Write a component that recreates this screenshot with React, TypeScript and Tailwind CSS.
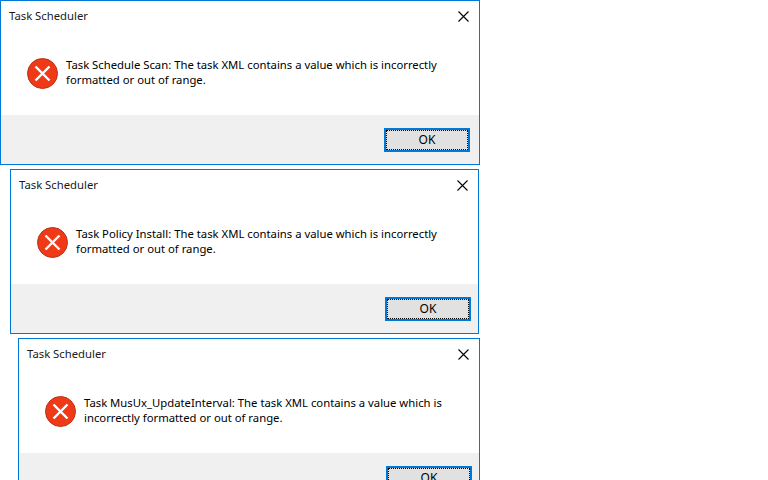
import React from 'react';

function ErrorIcon() {
  return (
    <svg width="31" height="31" viewBox="0 0 31 31" className="mt-[0.5px] shrink-0">
      <circle cx="15.5" cy="15.5" r="15" fill="#f03a17" stroke="#b5341c" strokeWidth="1" />
      <path d="M8.5 8.5 L22.5 22.5 M22.5 8.5 L8.5 22.5" stroke="#fff" strokeWidth="2.4" fill="none" />
    </svg>
  );
}

function CloseIcon() {
  return (
    <svg width="11" height="11" viewBox="0 0 11 11">
      <path d="M0.5 0.5 L10.5 10.5 M10.5 0.5 L0.5 10.5" stroke="#000" strokeWidth="1.1" fill="none" />
    </svg>
  );
}

type DialogProps = {
  className: string;
  footerClass: string;
  lines: string[];
};

function Dialog({ className, footerClass, lines }: DialogProps) {
  return (
    <div className={`flex h-[165px] shrink-0 flex-col border border-[#0078d7] bg-white ${className}`}>
      <div className="flex h-[30px] shrink-0 items-center justify-between pl-2 pr-[10px]">
        <span>Task Scheduler</span>
        <CloseIcon />
      </div>
      <div className="flex h-[84px] shrink-0 items-start pl-[26px] pt-[26px]">
        <ErrorIcon />
        <div className="ml-[8px] leading-[15px] text-black whitespace-nowrap">
          {lines.map((line) => (
            <div key={line}>{line}</div>
          ))}
        </div>
      </div>
      <div className={`flex flex-1 items-start justify-end bg-[#f0f0f0] pt-[13px] ${footerClass}`}>
        <button className="h-[24px] w-[86px] border-2 border-[#0078d7] bg-[#e1e1e1] p-0">
          <span className="flex h-full w-full items-center justify-center border border-dotted border-black text-[12px] text-black">
            OK
          </span>
        </button>
      </div>
    </div>
  );
}

export default function App() {
  return (
    <div className="flex h-screen flex-col gap-[4px] overflow-hidden bg-white text-[11.3px] text-[#1a1a1a] font-['Noto_Sans',sans-serif]">
      <Dialog
        className="w-[480px]"
        footerClass="pr-[9px]"
        lines={[
          'Task Schedule Scan: The task XML contains a value which is incorrectly',
          'formatted or out of range.',
        ]}
      />
      <Dialog
        className="ml-[10px] w-[469px]"
        footerClass="pr-[7px]"
        lines={[
          'Task Policy Install: The task XML contains a value which is incorrectly',
          'formatted or out of range.',
        ]}
      />
      <Dialog
        className="ml-[18px] w-[462px]"
        footerClass="pr-[7px]"
        lines={[
          'Task MusUx_UpdateInterval: The task XML contains a value which is',
          'incorrectly formatted or out of range.',
        ]}
      />
    </div>
  );
}
